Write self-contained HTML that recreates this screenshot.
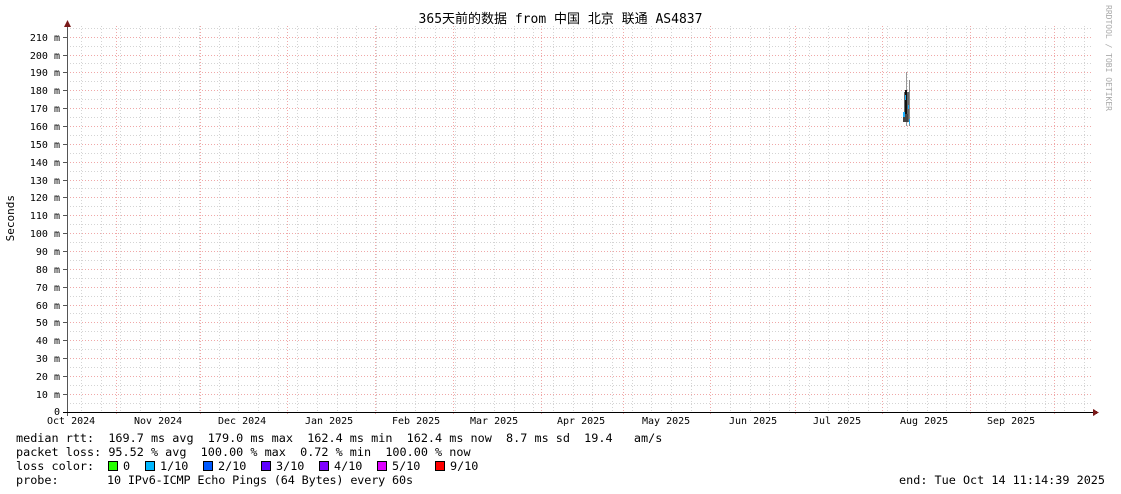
<!DOCTYPE html>
<html><head><meta charset="utf-8"><style>
html,body{margin:0;padding:0;background:#fff;}
body{width:1121px;height:494px;position:relative;overflow:hidden;font-family:"DejaVu Sans Mono","Liberation Mono",monospace;color:#000;}
.t{position:absolute;white-space:pre;font-size:11.8px;line-height:14px;}
.yl{position:absolute;right:1061px;font-size:10px;line-height:10px;white-space:pre;}
.xl{position:absolute;top:416px;font-size:10px;line-height:12px;white-space:pre;}
.sq{position:absolute;width:8px;height:8px;border:1px solid #000;top:461px;}
</style></head><body>
<svg width="1121" height="494" style="position:absolute;left:0;top:0" shape-rendering="crispEdges">
<g stroke="#d4d4d4" stroke-width="1" stroke-dasharray="1,2" fill="none">
<path d="M67 403.5H1093M67 385.5H1093M67 367.5H1093M67 349.5H1093M67 331.5H1093M67 313.5H1093M67 296.5H1093M67 278.5H1093M67 260.5H1093M67 242.5H1093M67 224.5H1093M67 206.5H1093M67 188.5H1093M67 171.5H1093M67 153.5H1093M67 135.5H1093M67 117.5H1093M67 99.5H1093M67 81.5H1093M67 63.5H1093M67 46.5H1093M67 28.5H1093"/>
<path d="M81.5 26V412M101.5 26V412M120.5 26V412M140.5 26V412M160.5 26V412M179.5 26V412M199.5 26V412M219.5 26V412M238.5 26V412M258.5 26V412M278.5 26V412M297.5 26V412M317.5 26V412M337.5 26V412M356.5 26V412M376.5 26V412M396.5 26V412M415.5 26V412M435.5 26V412M455.5 26V412M474.5 26V412M494.5 26V412M514.5 26V412M533.5 26V412M553.5 26V412M573.5 26V412M592.5 26V412M612.5 26V412M632.5 26V412M651.5 26V412M671.5 26V412M691.5 26V412M710.5 26V412M730.5 26V412M750.5 26V412M769.5 26V412M789.5 26V412M809.5 26V412M828.5 26V412M848.5 26V412M868.5 26V412M887.5 26V412M907.5 26V412M927.5 26V412M946.5 26V412M966.5 26V412M986.5 26V412M1005.5 26V412M1025.5 26V412M1045.5 26V412M1064.5 26V412M1084.5 26V412"/>
</g>
<g stroke="#f0a8a8" stroke-width="1" stroke-dasharray="1,2" fill="none">
<path d="M67 394.5H1093M67 376.5H1093M67 358.5H1093M67 340.5H1093M67 322.5H1093M67 305.5H1093M67 287.5H1093M67 269.5H1093M67 251.5H1093M67 233.5H1093M67 215.5H1093M67 197.5H1093M67 180.5H1093M67 162.5H1093M67 144.5H1093M67 126.5H1093M67 108.5H1093M67 90.5H1093M67 72.5H1093M67 55.5H1093M67 37.5H1093"/>
<path d="M116.5 26V416M200.5 26V416M287.5 26V416M375.5 26V416M453.5 26V416M541.5 26V416M623.5 26V416M710.5 26V416M795.5 26V416M882.5 26V416M970.5 26V416M1054.5 26V416"/>
</g>
<g stroke="#000" stroke-width="1">
<path d="M63 394.5H67M63 376.5H67M63 358.5H67M63 340.5H67M63 322.5H67M63 305.5H67M63 287.5H67M63 269.5H67M63 251.5H67M63 233.5H67M63 215.5H67M63 197.5H67M63 180.5H67M63 162.5H67M63 144.5H67M63 126.5H67M63 108.5H67M63 90.5H67M63 72.5H67M63 55.5H67M63 37.5H67" stroke="#555"/>
<path d="M67.5 25V416" stroke="#555"/>
<path d="M63 412.5H1094"/>
</g>
<path d="M64 27L67.5 20L71 27Z" fill="#7a1a1a"/>
<path d="M1093 409L1099 412.5L1093 416Z" fill="#7a1a1a"/>
<g>
<rect x="906" y="72" width="1" height="54" fill="#999"/>
<rect x="909" y="80" width="1" height="46" fill="#888"/>
<rect x="904" y="92" width="5" height="30" fill="#666"/>
<rect x="905" y="90" width="2" height="28" fill="#111"/>
<rect x="903" y="114" width="5" height="8" fill="#444"/>
<rect x="905" y="95" width="1" height="5" fill="#1ab0ff"/>
<rect x="908" y="105" width="1" height="4" fill="#1ab0ff"/>
<rect x="903" y="112" width="2" height="5" fill="#1ab0ff"/>
<rect x="909" y="119" width="1" height="5" fill="#1ab0ff"/>
</g>
</svg>
<div class="t" style="left:0;width:1121px;text-align:center;top:13px;font-family:'DejaVu Sans Mono','Noto Sans CJK SC',monospace;font-size:13px;">365天前的数据 from 中国 北京 联通 AS4837</div>
<div style="position:absolute;left:1104px;top:5px;writing-mode:vertical-rl;font-size:8px;color:#aaa;white-space:pre;">RRDTOOL / TOBI OETIKER</div>
<div style="position:absolute;left:4px;top:195px;writing-mode:vertical-rl;transform:rotate(180deg);font-size:11px;white-space:pre;">Seconds</div>
<div class="yl" style="top:34px">210 m</div>
<div class="yl" style="top:52px">200 m</div>
<div class="yl" style="top:69px">190 m</div>
<div class="yl" style="top:87px">180 m</div>
<div class="yl" style="top:105px">170 m</div>
<div class="yl" style="top:123px">160 m</div>
<div class="yl" style="top:141px">150 m</div>
<div class="yl" style="top:159px">140 m</div>
<div class="yl" style="top:177px">130 m</div>
<div class="yl" style="top:194px">120 m</div>
<div class="yl" style="top:212px">110 m</div>
<div class="yl" style="top:230px">100 m</div>
<div class="yl" style="top:248px">90 m</div>
<div class="yl" style="top:266px">80 m</div>
<div class="yl" style="top:284px">70 m</div>
<div class="yl" style="top:302px">60 m</div>
<div class="yl" style="top:319px">50 m</div>
<div class="yl" style="top:337px">40 m</div>
<div class="yl" style="top:355px">30 m</div>
<div class="yl" style="top:373px">20 m</div>
<div class="yl" style="top:391px">10 m</div>
<div class="yl" style="top:408px">0</div>
<div class="xl" style="left:47px">Oct 2024</div>
<div class="xl" style="left:134px">Nov 2024</div>
<div class="xl" style="left:218px">Dec 2024</div>
<div class="xl" style="left:305px">Jan 2025</div>
<div class="xl" style="left:392px">Feb 2025</div>
<div class="xl" style="left:470px">Mar 2025</div>
<div class="xl" style="left:557px">Apr 2025</div>
<div class="xl" style="left:642px">May 2025</div>
<div class="xl" style="left:729px">Jun 2025</div>
<div class="xl" style="left:813px">Jul 2025</div>
<div class="xl" style="left:900px">Aug 2025</div>
<div class="xl" style="left:987px">Sep 2025</div>
<div class="t" style="left:16px;top:431px">median rtt:  169.7 ms avg  179.0 ms max  162.4 ms min  162.4 ms now  8.7 ms sd  19.4   am/s</div>
<div class="t" style="left:16px;top:445px">packet loss: 95.52 % avg  100.00 % max  0.72 % min  100.00 % now</div>
<div class="t" style="left:16px;top:459px">loss color:</div>
<div class="sq" style="left:108px;background:#26ff00"></div><div class="t" style="left:123px;top:459px">0</div>
<div class="sq" style="left:145px;background:#00b8ff"></div><div class="t" style="left:160px;top:459px">1/10</div>
<div class="sq" style="left:203px;background:#0059ff"></div><div class="t" style="left:218px;top:459px">2/10</div>
<div class="sq" style="left:261px;background:#5e00ff"></div><div class="t" style="left:276px;top:459px">3/10</div>
<div class="sq" style="left:319px;background:#7e00ff"></div><div class="t" style="left:334px;top:459px">4/10</div>
<div class="sq" style="left:377px;background:#dd00ff"></div><div class="t" style="left:392px;top:459px">5/10</div>
<div class="sq" style="left:435px;background:#ff0000"></div><div class="t" style="left:450px;top:459px">9/10</div>
<div class="t" style="left:16px;top:473px">probe:</div>
<div class="t" style="left:107px;top:473px;letter-spacing:-0.15px">10 IPv6-ICMP Echo Pings (64 Bytes) every 60s</div>
<div class="t" style="right:16px;top:473px">end: Tue Oct 14 11:14:39 2025</div>
</body></html>
